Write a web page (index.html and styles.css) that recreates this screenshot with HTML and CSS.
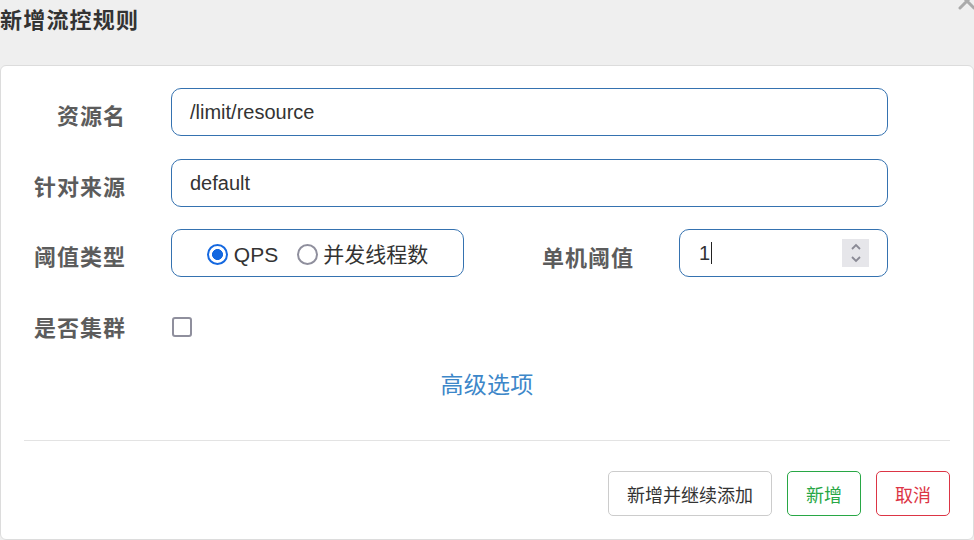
FILE: index.html
```html
<!DOCTYPE html>
<html lang="zh-CN">
<head>
<meta charset="utf-8">
<title>新增流控规则</title>
<link rel="stylesheet" href="styles.css">
</head>
<body>
<div class="dialog">
  <div class="header">
    <h1 class="title">新增流控规则</h1>
    <svg class="close" width="20" height="20" viewBox="0 0 20 20"><path d="M3 3 L17 17 M17 3 L3 17" stroke="#aaaaaa" stroke-width="3" stroke-linecap="round"/></svg>
  </div>
  <div class="card">
    <div class="row">
      <div class="label">资源名</div>
      <div class="field wide"><span class="val">/limit/resource</span></div>
    </div>
    <div class="row">
      <div class="label">针对来源</div>
      <div class="field wide"><span class="val">default</span></div>
    </div>
    <div class="row">
      <div class="label">阈值类型</div>
      <div class="field radios">
        <span class="radio checked"></span><span class="rtext">QPS</span>
        <span class="radio second"></span><span class="rtext">并发线程数</span>
      </div>
      <div class="label label2">单机阈值</div>
      <div class="field num">
        <span class="val">1</span><span class="caret"></span>
        <span class="spin">
          <svg width="12" height="22" viewBox="0 0 12 22"><path d="M2 7 L6 3 L10 7 M2 15 L6 19 L10 15" fill="none" stroke="#8a8a95" stroke-width="1.8"/></svg>
        </span>
      </div>
    </div>
    <div class="row row4">
      <div class="label">是否集群</div>
      <span class="checkbox"></span>
    </div>
    <div class="adv">高级选项</div>
    <div class="divider"></div>
    <div class="actions">
      <button class="btn">新增并继续添加</button>
      <button class="btn ok">新增</button>
      <button class="btn cancel">取消</button>
    </div>
  </div>
</div>
</body>
</html>
```
FILE: styles.css
```css
* { box-sizing: border-box; }
html, body {
  margin: 0;
  padding: 0;
  background: #efefef;
  font-family: "Liberation Sans", "Noto Sans CJK SC", sans-serif;
  overflow: hidden;
}
.dialog {
  width: 974px;
  height: 540px;
  display: flex;
  flex-direction: column;
}
.header {
  position: relative;
  height: 65px;
}
.title {
  margin: 0;
  font-size: 22px;
  line-height: 36px;
  font-weight: bold;
  color: #333;
  font-family: "Noto Sans CJK SC", sans-serif;
  letter-spacing: 1.2px;
}
.close {
  position: absolute;
  right: -3px;
  top: -9px;
}
.card {
  flex: 1;
  background: #fff;
  border: 1px solid #dcdcdc;
  border-radius: 6px;
  padding: 22px 23px 22px 23px;
  display: flex;
  flex-direction: column;
}
.row {
  display: flex;
  align-items: center;
  height: 48px;
  margin-bottom: 23px;
}
.row:nth-child(2) { margin-bottom: 22px; }
.label {
  width: 102px;
  margin-right: 45px;
  text-align: right;
  font-family: "Noto Sans CJK SC", sans-serif;
  font-weight: bold;
  font-size: 22px;
  letter-spacing: 1px;
  color: #5c5c5c;
  line-height: 30px;
  padding-top: 4px;
}
.field {
  height: 48px;
  border: 1px solid #3572b0;
  border-radius: 10px;
  display: flex;
  align-items: center;
  font-size: 20px;
  color: #333;
}
.wide {
  width: 717px;
  padding-left: 18px;
}
.val { line-height: 24px; }
.radios {
  width: 293px;
  justify-content: center;
  font-size: 21px;
  padding-top: 4px;
}
.radio {
  width: 21px;
  height: 21px;
  border-radius: 50%;
  border: 2.5px solid #8f8f9d;
  margin-right: 6px;
  margin-top: -1px;
}
.radio.checked {
  border: 2.5px solid #1468e0;
  background: radial-gradient(circle, #1468e0 0 5.2px, #fff 5.7px);
}
.radio.second { margin-left: 19px; margin-right: 5px; }
.rtext {
  line-height: 24px;
  font-family: "Liberation Sans", "Noto Sans CJK SC", sans-serif;
  color: #333;
}
.label2 {
  width: 93px;
  margin-left: 77px;
  margin-right: 45px;
  padding-top: 6px;
}
.num {
  width: 209px;
  padding-left: 19px;
  padding-right: 18px;
}
.caret {
  width: 1px;
  height: 22px;
  background: #222;
  margin-left: 1px;
}
.spin {
  margin-left: auto;
  width: 27px;
  height: 28px;
  background: #e6e6ea;
  display: flex;
  align-items: center;
  justify-content: center;
}
.row4 {
  height: 52px;
  margin-bottom: 13px;
}
.row4 .label { padding-top: 0; }
.checkbox {
  width: 20px;
  height: 20px;
  border: 2px solid #8f8f9d;
  border-radius: 3px;
  margin-left: 1px;
  margin-top: 2px;
}
.adv {
  text-align: center;
  font-family: "Noto Sans CJK SC", sans-serif;
  font-size: 23px;
  line-height: 36px;
  color: #3d87c9;
  letter-spacing: 0.3px;
}
.divider {
  height: 1px;
  background: #e3e3e3;
  margin-top: 39px;
}
.actions {
  margin-top: 30px;
  display: flex;
  justify-content: flex-end;
  gap: 15px;
}
.btn {
  height: 45px;
  padding: 0 18px;
  background: #fff;
  border: 1px solid #cccccc;
  border-radius: 5px;
  font-family: "Noto Sans CJK SC", sans-serif;
  font-size: 18px;
  color: #333;
  line-height: 24px;
}
.btn.ok { border-color: #28a745; color: #28a745; }
.btn.cancel { border-color: #dc3545; color: #dc3545; }
```
